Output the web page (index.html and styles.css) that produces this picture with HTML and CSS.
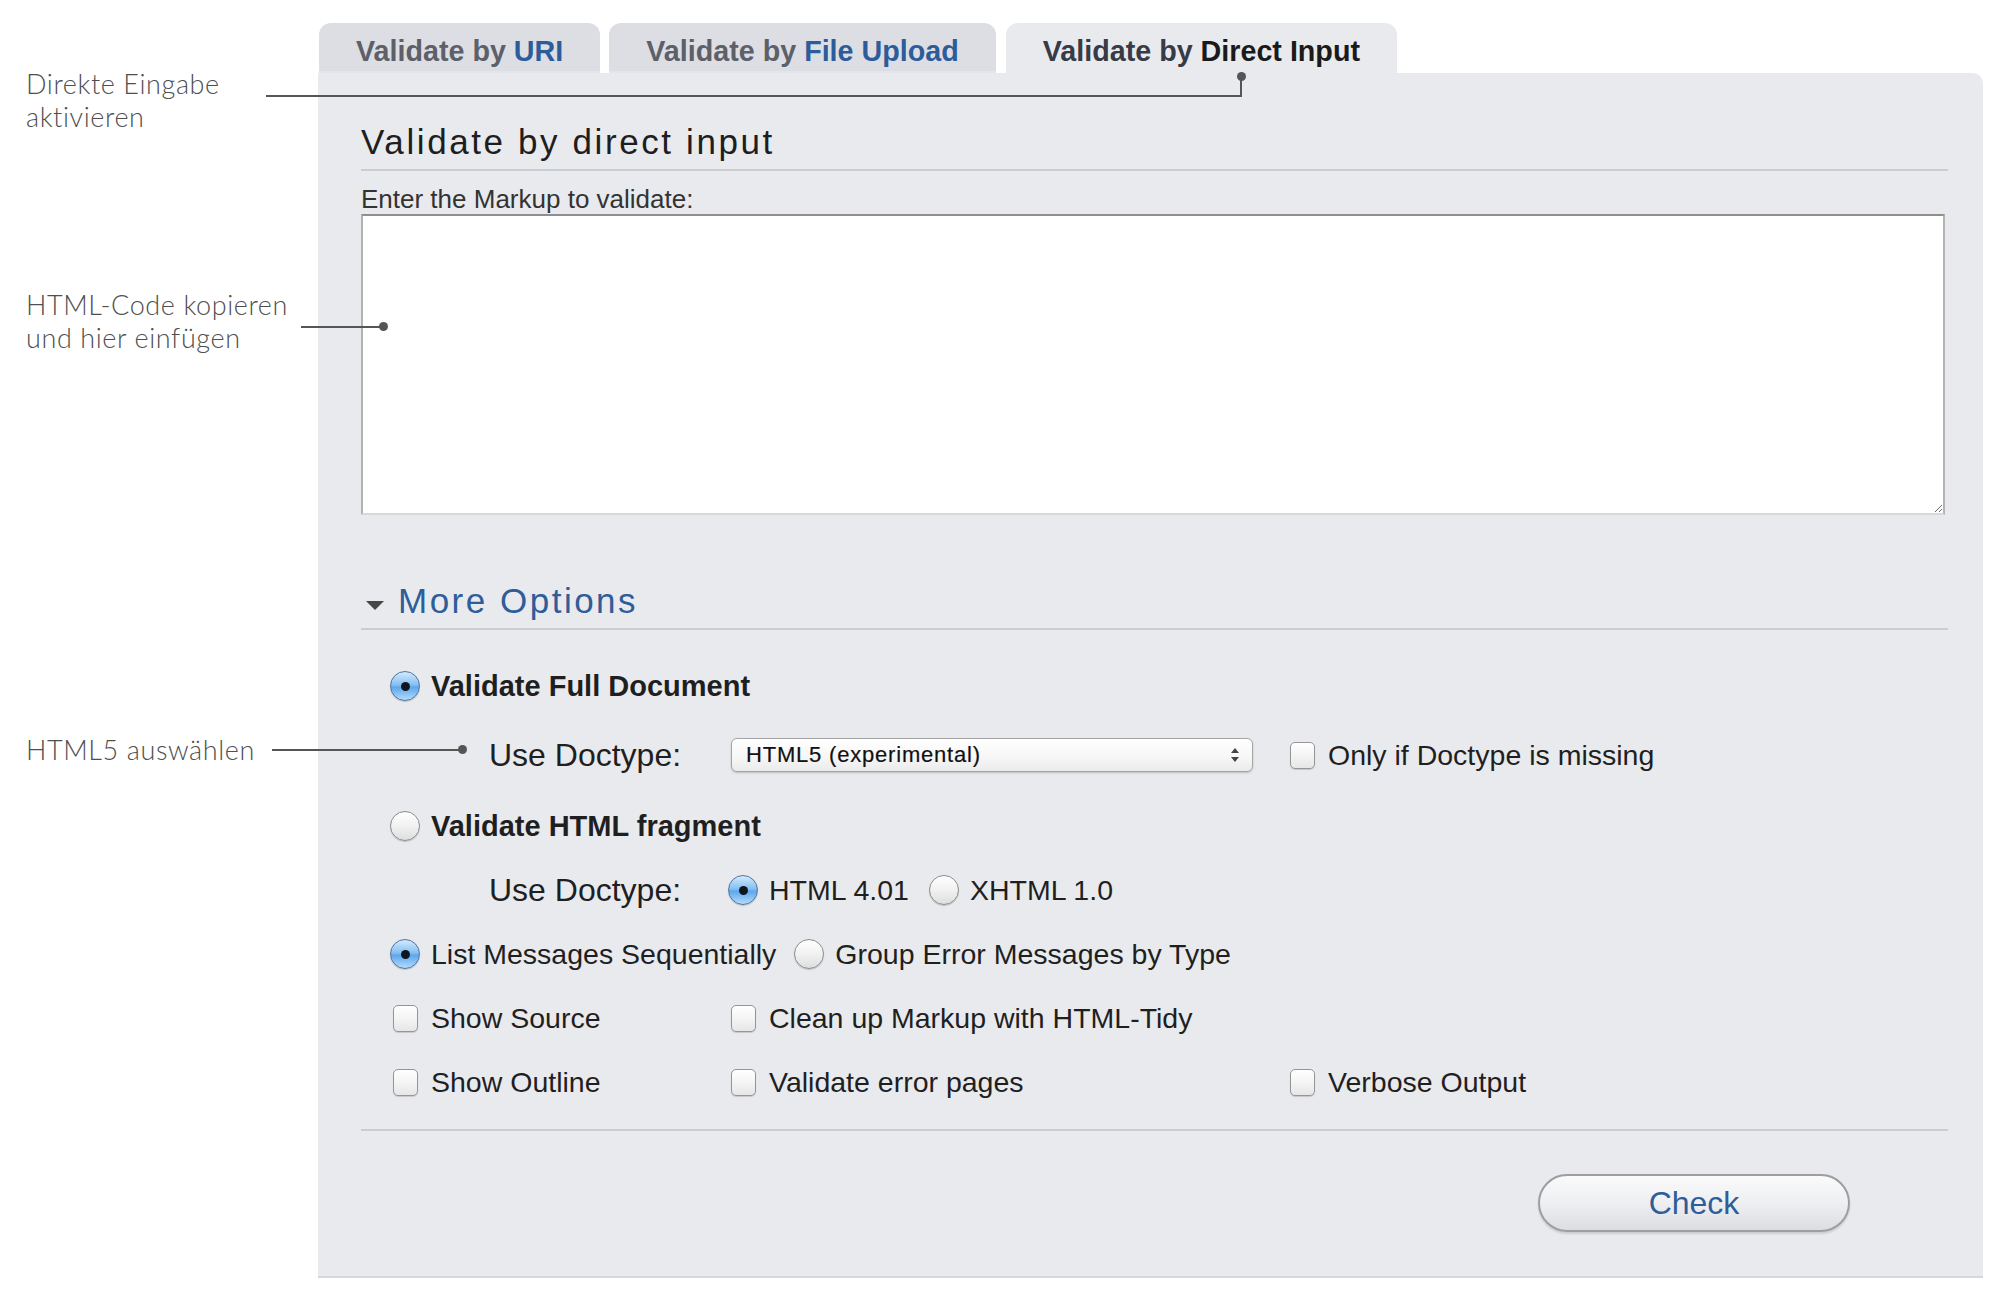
FILE: index.html
```html
<!DOCTYPE html>
<html lang="de">
<head>
<meta charset="utf-8">
<title>Validate by direct input</title>
<link rel="stylesheet" href="styles.css">
</head>
<body>
<div class="page">
  <main class="validator">
    <nav class="tabs">
      <div class="tab"><span class="pre">Validate by </span><span class="key">URI</span></div>
      <div class="tab"><span class="pre">Validate by </span><span class="key">File Upload</span></div>
      <div class="tab active"><span class="pre">Validate by </span><span class="key">Direct Input</span></div>
    </nav>
    <section class="panel">
      <h1 class="title">Validate by direct input</h1>
      <label class="field-label" for="markup">Enter the Markup to validate:</label>
      <textarea class="markup" id="markup"></textarea>

      <h2 class="more"><span class="tri"></span>More Options</h2>

      <div class="options">
        <div class="row r-full">
          <span class="radio on"></span><span class="opt bold">Validate Full Document</span>
        </div>
        <div class="row r-doctype">
          <span class="dt-label">Use Doctype:</span>
          <div class="select">
            <span class="select-text">HTML5 (experimental)</span>
            <svg class="arrows" width="10" height="16" viewBox="0 0 10 16"><path d="M5 1 L9 6 H1 Z" fill="#444"/><path d="M5 15 L9 10 H1 Z" fill="#444"/></svg>
          </div>
          <span class="check"></span><span class="opt">Only if Doctype is missing</span>
        </div>
        <div class="row r-frag">
          <span class="radio"></span><span class="opt bold">Validate HTML fragment</span>
        </div>
        <div class="row r-doctype2">
          <span class="dt-label dt2">Use Doctype:</span>
          <span class="radio on"></span><span class="opt">HTML 4.01</span>
          <span class="radio sp21"></span><span class="opt">XHTML 1.0</span>
        </div>
        <div class="row r-list">
          <span class="radio on"></span><span class="opt">List Messages Sequentially</span>
          <span class="radio sp18"></span><span class="opt">Group Error Messages by Type</span>
        </div>
        <div class="row grid3">
          <div class="cell"><span class="check"></span><span class="opt">Show Source</span></div>
          <div class="cell"><span class="check"></span><span class="opt">Clean up Markup with HTML-Tidy</span></div>
          <div class="cell"></div>
        </div>
        <div class="row grid3">
          <div class="cell"><span class="check"></span><span class="opt">Show Outline</span></div>
          <div class="cell"><span class="check"></span><span class="opt">Validate error pages</span></div>
          <div class="cell"><span class="check"></span><span class="opt">Verbose Output</span></div>
        </div>
      </div>

      <div class="actions">
        <button class="check-btn" type="button">Check</button>
      </div>
    </section>
  </main>

  <div class="note note1">Direkte Eingabe<br>aktivieren</div>
  <div class="lead lead1h"></div>
  <div class="lead lead1v"></div>
  <div class="dot dot1"></div>

  <div class="note note2">HTML-Code kopieren<br>und hier einfügen</div>
  <div class="lead lead2"></div>
  <div class="dot dot2"></div>

  <div class="note note3">HTML5 auswählen</div>
  <div class="lead lead3"></div>
  <div class="dot dot3"></div>
</div>
</body>
</html>
```

FILE: styles.css
```css
* { box-sizing: border-box; }

html, body {
  margin: 0;
  padding: 0;
  background: #ffffff;
}

body {
  font-family: "Liberation Sans", Arial, Helvetica, sans-serif;
  color: #1f1f1f;
}

.page {
  position: relative;
  width: 2000px;
  height: 1300px;
  padding: 23px 0 0 318px;
}

.validator {
  width: 1665px;
}

/* Tabs */
.tabs {
  display: flex;
  gap: 9px;
  padding-left: 1px;
}

.tab {
  height: 50px;
  line-height: 56px;
  padding: 0 37px;
  border-radius: 12px 12px 0 0;
  background: #dcdee4;
  border-bottom: 2px solid #e4e5ea;
  font-size: 28.7px;
  font-weight: bold;
  white-space: nowrap;
}

.tab .pre { color: #5d6069; }
.tab .key { color: #2d5c9b; }

.tab.active {
  background: #e9eaee;
  border-bottom-color: #e9eaee;
  margin-left: 1px;
}
.tab.active .pre { color: #363b47; }
.tab.active .key { color: #1a1a1a; }

/* Panel */
.panel {
  background: #e9eaee;
  border-top-right-radius: 10px;
  border-bottom: 2px solid #d6d7db;
  padding: 49px 35px 44px 43px;
}

.title {
  margin: 0;
  font-size: 35px;
  line-height: 40px;
  font-weight: normal;
  letter-spacing: 2.6px;
  color: #1e1e1e;
  padding-bottom: 7px;
  border-bottom: 2px solid #cbccd2;
}

.field-label {
  display: block;
  margin-top: 13px;
  font-size: 26px;
  line-height: 30px;
  color: #333333;
}

.markup {
  display: block;
  width: 1584px;
  height: 301px;
  margin: 0;
  background: #ffffff;
  border-style: solid;
  border-width: 2px;
  border-color: #8f8f8f #b3b3b3 #d8d8d8 #b3b3b3;
  resize: both;
}

.more {
  margin: 66px 0 0 0;
  display: flex;
  align-items: center;
  font-size: 35px;
  line-height: 40px;
  font-weight: normal;
  letter-spacing: 2.5px;
  color: #2f5d99;
  padding-bottom: 7px;
  border-bottom: 2px solid #cbccd2;
}

.tri {
  width: 0;
  height: 0;
  margin: 8px 14px 0 5px;
  border-left: 9px solid transparent;
  border-right: 9px solid transparent;
  border-top: 9px solid #474747;
}

/* Options */
.options {
  display: flex;
  flex-direction: column;
  gap: 24px;
  margin-top: 38px;
  padding: 0 0 27px 29px;
  border-bottom: 2px solid #cbccd2;
}

.row {
  display: flex;
  align-items: center;
  height: 40px;
  font-size: 28.5px;
  color: #1f1f1f;
  white-space: nowrap;
}

.r-full { height: 36px; }
.r-doctype { height: 54px; }

.opt.bold { font-weight: bold; font-size: 29px; }

.radio {
  position: relative;
  flex: none;
  width: 30px;
  height: 30px;
  margin-right: 11px;
  border-radius: 50%;
  border: 1px solid #8d8d8d;
  background: linear-gradient(#ffffff 0%, #f1f1f1 50%, #dedede 100%);
  box-shadow: 0 1px 1px rgba(0, 0, 0, 0.18);
}

.radio.on {
  border-color: #4f74a1;
  background: linear-gradient(#d4ebfd 0%, #86c0f3 45%, #5ea7ec 55%, #b3dcfb 100%);
}

.radio.on::after {
  content: "";
  position: absolute;
  left: 50%;
  top: 50%;
  width: 9px;
  height: 9px;
  margin: -4.5px 0 0 -4.5px;
  border-radius: 50%;
  background: #0f1620;
}

.radio.sp21 { margin-left: 20px; }
.radio.sp18 { margin-left: 18px; }

.check {
  flex: none;
  width: 25px;
  height: 27px;
  margin-right: 13px;
  border-radius: 5px;
  border: 1px solid #959595;
  background: linear-gradient(#ffffff 0%, #f4f4f4 50%, #e6e6e6 100%);
  box-shadow: 0 1px 1px rgba(0, 0, 0, 0.15);
}

.dt-label {
  font-size: 32px;
  width: 341px;
  padding-left: 99px;
  flex: none;
}

.dt-label.dt2 { width: 338px; }

.r-doctype .check { margin-left: 37px; }

.select {
  display: flex;
  align-items: center;
  width: 522px;
  height: 34px;
  padding: 0 12px 0 14px;
  border: 1px solid #a4a4a4;
  border-radius: 6px;
  background: linear-gradient(#ffffff 0%, #f7f7f7 55%, #ebebeb 100%);
  box-shadow: 0 1px 2px rgba(0, 0, 0, 0.2);
}

.select-text {
  font-size: 22px;
  letter-spacing: 0.8px;
  color: #111111;
  -webkit-text-stroke: 0.2px #111111;
}

.arrows {
  margin-left: auto;
}

.grid3 {
  display: grid;
  grid-template-columns: 338px 559px auto;
}

.cell {
  display: flex;
  align-items: center;
}

.cell .check { margin-left: 3px; }

/* Actions */
.actions {
  display: flex;
  justify-content: flex-end;
  padding: 43px 98px 0 0;
}

.check-btn {
  width: 312px;
  height: 58px;
  border-radius: 29px;
  border: 2px solid #9d9da2;
  background: linear-gradient(#fafafb 0%, #eeeff2 50%, #dcdde1 100%);
  box-shadow: 0 2px 2px rgba(0, 0, 0, 0.12);
  font-family: "Liberation Sans", Arial, sans-serif;
  font-size: 32px;
  color: #2f5d99;
  cursor: pointer;
}

/* Annotations (callouts over the page) */
.note {
  position: absolute;
  left: 26px;
  font-family: Lato, "Open Sans", sans-serif;
  font-weight: 300;
  font-size: 27px;
  line-height: 33px;
  color: #4f4f4f;
  letter-spacing: 0.6px;
}

.note1 { top: 67px; }
.note2 { top: 288px; }
.note3 { top: 733px; }

.lead {
  position: absolute;
  background: #555555;
}

.lead1h { left: 266px; top: 95px; width: 976px; height: 2px; }
.lead1v { left: 1240px; top: 78px; width: 2px; height: 19px; }
.lead2 { left: 301px; top: 326px; width: 82px; height: 2px; }
.lead3 { left: 272px; top: 749px; width: 190px; height: 2px; }

.dot {
  position: absolute;
  width: 9px;
  height: 9px;
  border-radius: 50%;
  background: #555555;
}

.dot1 { left: 1237px; top: 72px; }
.dot2 { left: 379px; top: 322px; }
.dot3 { left: 458px; top: 745px; }
```
